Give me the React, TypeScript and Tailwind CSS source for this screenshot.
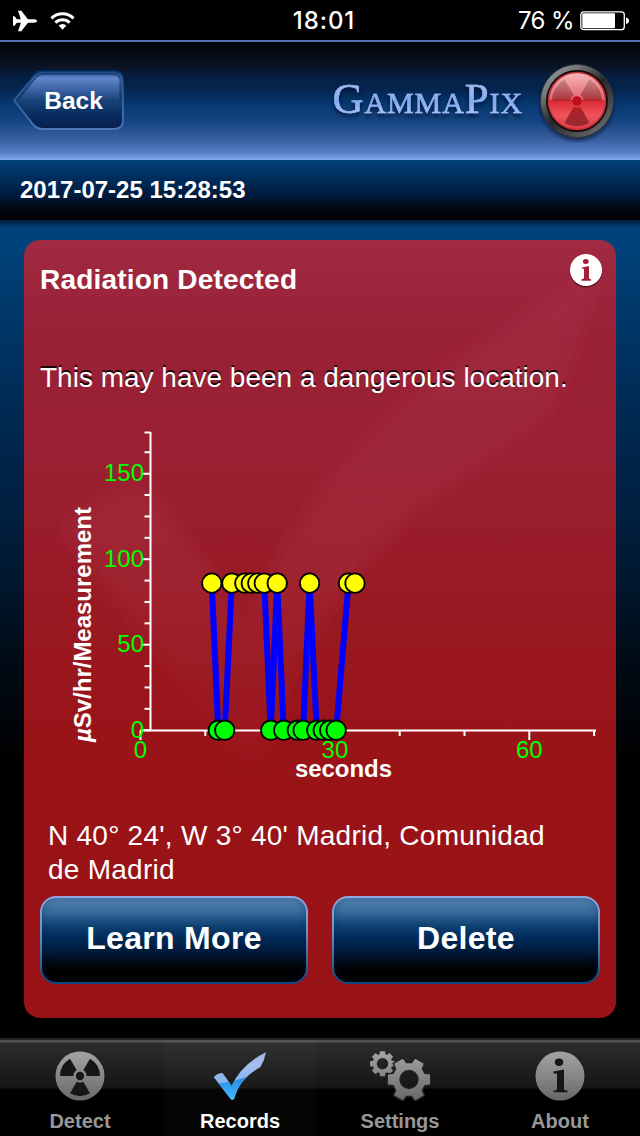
const HIGH = 86;

// [seconds, uSv/hr]
const readings: [number, number][] = [
  [11, HIGH],
  [12, 0],
  [13, 0],
  [14.1, HIGH],
  [16.1, HIGH],
  [17.1, HIGH],
  [18.1, HIGH],
  [19.1, HIGH],
  [20.1, 0],
  [21.1, HIGH],
  [22.1, 0],
  [24.2, 0],
  [25.1, 0],
  [26.1, HIGH],
  [27.2, 0],
  [28.2, 0],
  [29.2, 0],
  [30.2, 0],
  [32.1, HIGH],
  [33.1, HIGH],
];

const px = (t: number) => 80.5 + t * 6.48;
const py = (v: number) => 305.2 - v * 1.71;

const TICK =
  "M0.8 26.200Q4.500 22 9.500 22Q14 28 18.700 35Q27.800 13.700 53 1.200Q51.500 9.500 47.500 16Q26 28 21.300 47.500Q19.500 50 17.500 47.800Z";

// Blade wedge between two radii, angles in degrees clockwise from the right
function blade(cx: number, cy: number, r1: number, r2: number, from: number, to: number) {
  const p = (r: number, a: number) => {
    const rad = (a * Math.PI) / 180;
    return `${(cx + r * Math.cos(rad)).toFixed(2)} ${(cy + r * Math.sin(rad)).toFixed(2)}`;
  };
  return `M${p(r1, from)}L${p(r2, from)}A${r2} ${r2} 0 0 1 ${p(r2, to)}L${p(r1, to)}A${r1} ${r1} 0 0 0 ${p(r1, from)}Z`;
}

function gear(cx: number, cy: number, outer: number, body: number, hole: number, teeth: number, half: number) {
  const pts: string[] = [];
  for (let i = 0; i < teeth; i++) {
    const mid = (i * 2 * Math.PI) / teeth;
    const inner = Math.asin(half / body);
    const tip = Math.asin((half * 0.88) / outer);
    [
      [body, mid - inner],
      [outer, mid - tip],
      [outer, mid + tip],
      [body, mid + inner],
    ].forEach(([r, a]) => pts.push(`${(cx + r * Math.cos(a)).toFixed(2)} ${(cy + r * Math.sin(a)).toFixed(2)}`));
  }
  return `M${pts.join("L")}ZM${cx - hole} ${cy}a${hole} ${hole} 0 1 0 ${hole * 2} 0a${hole} ${hole} 0 1 0 ${-hole * 2} 0Z`;
}

const bladeAngles = [
  [180, 240],
  [300, 360],
  [60, 120],
];

function StatusBar() {
  return (
    <div className="grid h-10 shrink-0 grid-cols-3 items-center bg-black pl-[13px] pr-[11px] font-['Inter',sans-serif] text-white">
      <div className="flex items-center gap-[13px]">
        <svg width="24" height="22" viewBox="0 0 25 22" fill="#fff">
          <path d="M25 11c0-1.200-1.400-1.800-3.200-1.800h-6.200L8.600.3H5.200l3 8.900H4L1.700 6.100H0V15.900h1.700L4 12.800h4.200L5.200 21.700h3.400l7-8.900h6.200C23.600 12.800 25 12.200 25 11Z" />
        </svg>
        <svg width="25" height="20" viewBox="0 0 26 20" fill="none" stroke="#fff">
          <path d="M1.500 7.200a16.500 16.500 0 0 1 23 0" strokeWidth="3.200" />
          <path d="M5.600 11.700a10.500 10.500 0 0 1 14.800 0" strokeWidth="3.200" />
          <path d="M13 19l-4-4.200a5.700 5.700 0 0 1 8 0Z" fill="#fff" stroke="none" />
        </svg>
      </div>
      <div className="pl-[6px] text-center text-[24px] font-medium leading-[41px] tracking-[0.9px]">18:01</div>
      <div className="flex items-center justify-end gap-[6px]">
        <span className="whitespace-nowrap text-[24px] leading-[41px] tracking-[-0.6px]">76 %</span>
        <svg width="49" height="20" viewBox="0 0 49 20">
          <rect x="0.800" y="0.800" width="43.500" height="17.900" rx="3" fill="none" stroke="#fff" strokeWidth="1.300" />
          <rect x="2.300" y="2.300" width="32.700" height="14.900" rx="1" fill="#fff" />
          <path d="M46 6.500c2 .4 3 1.700 3 3.300s-1 2.900-3 3.300Z" fill="#fff" />
        </svg>
      </div>
    </div>
  );
}

function Emblem() {
  return (
    <svg width="80" height="84" viewBox="0 0 80 84" className="shrink-0">
      <defs>
        <linearGradient id="ring" x1="0.1" y1="0" x2="0.9" y2="1">
          <stop offset="0" stopColor="#a0a4a6" />
          <stop offset="0.22" stopColor="#75797c" />
          <stop offset="0.5" stopColor="#25282b" />
          <stop offset="0.75" stopColor="#4a4c4e" />
          <stop offset="1" stopColor="#77797a" />
        </linearGradient>
        <linearGradient id="redGlass" x1="0" y1="0" x2="0" y2="1">
          <stop offset="0" stopColor="#f7b9bb" />
          <stop offset="0.47" stopColor="#e0676c" />
          <stop offset="0.49" stopColor="#d92a35" />
          <stop offset="0.75" stopColor="#f0535c" />
          <stop offset="1" stopColor="#e23b47" />
        </linearGradient>
        <linearGradient id="redBlade" gradientUnits="userSpaceOnUse" x1="0" y1="18" x2="0" y2="68">
          <stop offset="0" stopColor="#c58a8d" />
          <stop offset="0.4" stopColor="#a43a42" />
          <stop offset="0.5" stopColor="#b5151f" />
          <stop offset="1" stopColor="#84252a" />
        </linearGradient>
        <filter id="soft" x="-30%" y="-30%" width="160%" height="160%">
          <feGaussianBlur stdDeviation="2" />
        </filter>
      </defs>
      <circle cx="40" cy="45" r="36.500" fill="#001028" opacity="0.7" filter="url(#soft)" />
      <circle cx="40" cy="42" r="36.500" fill="url(#ring)" stroke="#33383c" />
      <circle cx="40" cy="42" r="31" fill="#16080a" />
      <circle cx="40" cy="42" r="28.500" fill="url(#redGlass)" stroke="#c0323b" strokeWidth="1.500" />
      {bladeAngles.map(([from, to]) => (
        <path key={from} d={blade(40, 42, 6.5, 25, from, to)} fill="url(#redBlade)" opacity="0.85" />
      ))}
      <circle cx="40" cy="42" r="4.800" fill="#bb111c" />
    </svg>
  );
}

function Header() {
  return (
    <header className="flex h-[120px] shrink-0 items-center border-t-2 border-[#5074b3] bg-[linear-gradient(#020309,#0b1223_20%,#071f42_29%,#05244e_40%,#06386f_52%,#174684_68%,#385f9f_82%,#5379c5_93%,#7fabf0)] pl-3 pr-[23px]">
      <button className="relative h-[62px] w-[113px]">
        <svg width="113" height="62" viewBox="0 0 113 62" className="absolute inset-0">
          <defs>
            <linearGradient id="backFill" x1="0" y1="0" x2="0" y2="1">
              <stop offset="0" stopColor="#31569b" />
              <stop offset="0.12" stopColor="#6086cc" />
              <stop offset="0.3" stopColor="#3f65a8" />
              <stop offset="0.5" stopColor="#174478" />
              <stop offset="0.75" stopColor="#082d60" />
              <stop offset="1" stopColor="#061e4c" />
            </linearGradient>
            <linearGradient id="backEdge" x1="0" y1="0" x2="0" y2="1">
              <stop offset="0" stopColor="#043b72" />
              <stop offset="0.35" stopColor="#2a5a96" />
              <stop offset="1" stopColor="#4d78ba" />
            </linearGradient>
          </defs>
          <path
            d="M2 30.500L22 5.500Q25.500 1.500 30 1.500H102Q111 1.500 111 10.500V50Q111 59 102 59H30Q25.500 59 22 55.500Z"
            fill="url(#backFill)"
            stroke="url(#backEdge)"
            strokeWidth="1.800"
            strokeLinejoin="round"
          />
          <path
            d="M5 30L24 7Q27 4 31 4H101Q108.500 4 108.500 11V30"
            fill="none"
            stroke="#0a2857"
            strokeWidth="2"
            opacity="0.6"
          />
        </svg>
        <span className="relative block pl-[10px] text-[24.500px] font-bold leading-[58px] text-white">Back</span>
      </button>
      <div className="ml-auto flex items-center gap-[14px]">
        <div className="bg-[linear-gradient(#9fb9ee_25%,#84a9f0_50%,#a9c3f6_75%)] bg-clip-text font-['Liberation_Serif',serif] text-[30px] leading-[48px] tracking-[0.9px] text-transparent drop-shadow-[0_3px_2px_rgba(0,10,40,0.7)] [-webkit-text-stroke:0.5px_#8fb0f2]">
          <span className="text-[43px]">G</span>AMMA<span className="text-[43px]">P</span>IX
        </div>
        <Emblem />
      </div>
    </header>
  );
}

function Chart() {
  const points = readings.map(([t, v]) => `${px(t)},${py(v)}`).join(" ");
  const yTicks = Array.from({ length: 15 }, (_, i) => i * 12.5);
  const xTicks = Array.from({ length: 8 }, (_, i) => i * 10);

  return (
    <svg width="556" height="370" viewBox="0 0 556 370" className="block">
      <g stroke="#fff" strokeWidth="2">
        <path d="M90.500 7V305.500M80 305.500H536" />
        {yTicks.map((v) => (
          <path key={v} d={`M${v % 50 === 0 ? 82 : 84.500} ${v === 175 ? 7.500 : py(v)}H90.500`} />
        ))}
        {xTicks.map((t) => (
          <path key={t} d={`M${px(t)} 305.500V${t % 30 === 0 ? 315 : 311}`} />
        ))}
      </g>
      <g fill="#0f0" fontSize="24">
        {[0, 50, 100, 150].map((v) => (
          <text key={v} x="84" y={py(v) + 7.5} textAnchor="end">
            {v}
          </text>
        ))}
        {[0, 30, 60].map((t) => (
          <text key={t} x={px(t)} y="332.500" textAnchor="middle">
            {t}
          </text>
        ))}
      </g>
      <g fill="#fff" fontSize="24" fontWeight="700">
        <text x="235" y="352" textLength="97">
          seconds
        </text>
        <text transform="translate(31 317) rotate(-90)" textLength="235">
          <tspan fontStyle="italic">µ</tspan>Sv/hr/Measurement
        </text>
      </g>
      <polyline points={points} fill="none" stroke="#00f" strokeWidth="6" strokeLinejoin="round" />
      {readings.map(([t, v]) => (
        <circle key={t} cx={px(t)} cy={py(v)} r="9.700" fill={v > 0 ? "#ff0" : "#0f0"} stroke="#000" strokeWidth="1.800" />
      ))}
    </svg>
  );
}

function GlossButton({ label }: { label: string }) {
  return (
    <button className="h-[88px] w-[268px] rounded-[16px] bg-[linear-gradient(#8fa9dc,#7390c4_40%,#0c4580)] p-[2px]">
      <span className="block h-[84px] rounded-[14px] bg-[linear-gradient(#5584b0,#37699a_17%,#0d3f70_34%,#002a59_48%,#001c3d_62%,#000914_77%,#000_88%)] text-[32px] font-bold leading-[81px] tracking-[0.3px] text-white shadow-[inset_0_0_6px_rgba(0,40,90,0.4)]">
        {label}
      </span>
    </button>
  );
}

function ResultCard() {
  return (
    <section className="relative mx-6 mt-5 h-[778px] overflow-hidden rounded-[16px] bg-[linear-gradient(#a02a42,#9a2136_12%,#9a1f31_30%,#99171f_52%,#991317_68%,#981216)] text-white">
      {/* Watermark tick behind the result */}
      <svg width="592" height="778" viewBox="0 0 592 778" className="absolute inset-0">
        <defs>
          <linearGradient id="mark" x1="0" y1="0" x2="0" y2="1">
            <stop offset="0" stopColor="#c04a68" stopOpacity="0.14" />
            <stop offset="0.65" stopColor="#c04a68" stopOpacity="0.15" />
            <stop offset="1" stopColor="#c04a68" stopOpacity="0.03" />
          </linearGradient>
          <filter id="blurMark">
            <feGaussianBlur stdDeviation="0.8" />
          </filter>
        </defs>
        <g transform="translate(28 20) scale(10.3)">
          <path d={TICK} fill="url(#mark)" filter="url(#blurMark)" />
        </g>
      </svg>
      <div className="relative flex h-full flex-col">
        <div className="flex h-[120px] justify-between pl-4 pr-[13px] pt-[14px]">
          <h1 className="pt-[9px] text-[28px] font-bold leading-[34px] tracking-[0.2px]">Radiation Detected</h1>
          <svg width="34" height="36" viewBox="0 0 34 36">
            <circle cx="17" cy="17.500" r="16" fill="#5a1020" />
            <circle cx="17" cy="16" r="16" fill="#fff" />
            <g fill="#a02038">
              <ellipse cx="16.800" cy="7.500" rx="2.900" ry="2.500" />
              <path d="M13 13.500L20 12V24.600L22 25.300V26.700H12.500V25.300L15 24.600V14.800H13Z" />
            </g>
          </svg>
        </div>
        <p className="h-[65px] pl-4 text-[28px] leading-[36px] [text-shadow:0_-2px_0_#1a0508]">
          This may have been a dangerous location.
        </p>
        <div className="pl-9">
          <Chart />
        </div>
        <p className="mt-[24px] w-[540px] pl-6 text-[28px] leading-[34px] tracking-[0.25px]">
          N 40° 24', W 3° 40' Madrid, Comunidad de Madrid
        </p>
        <div className="mt-[9px] flex justify-between px-4">
          <GlossButton label="Learn More" />
          <GlossButton label="Delete" />
        </div>
      </div>
    </section>
  );
}

function DetectIcon() {
  return (
    <svg width="50" height="50" viewBox="0 0 50 50">
      <circle cx="25" cy="25" r="24.500" fill="url(#grey)" />
      <g fill="#161616">
        {bladeAngles.map(([from, to]) => (
          <path key={from} d={blade(25, 25, 6.5, 20, from, to)} />
        ))}
        <circle cx="25" cy="25" r="4.200" />
      </g>
    </svg>
  );
}

function RecordsIcon() {
  return (
    <svg width="54" height="50" viewBox="0 0 54 50">
      <defs>
        <linearGradient id="tick" gradientUnits="userSpaceOnUse" x1="0" y1="1" x2="0" y2="34">
          <stop offset="0" stopColor="#a3b9e8" />
          <stop offset="0.45" stopColor="#a3bdf0" />
          <stop offset="1" stopColor="#80b2ec" />
        </linearGradient>
        <linearGradient id="tickLow" gradientUnits="userSpaceOnUse" x1="0" y1="26" x2="0" y2="50">
          <stop offset="0" stopColor="#2389e8" />
          <stop offset="1" stopColor="#45beff" />
        </linearGradient>
        <clipPath id="tickShape">
          <path d={TICK} />
        </clipPath>
      </defs>
      <g clipPath="url(#tickShape)">
        <rect width="54" height="50" fill="url(#tick)" />
        <path d="M0 33Q20 32 44 22V50H0Z" fill="url(#tickLow)" />
      </g>
    </svg>
  );
}

function SettingsIcon() {
  return (
    <svg width="62" height="50" viewBox="0 0 62 50" fill="url(#grey)" fillRule="evenodd">
      <path d={gear(13.5, 12.7, 12.7, 9.8, 5.7, 8, 2.9)} />
      <path d={gear(40, 28.5, 21.6, 16.5, 9.7, 6, 5.6)} fill="none" stroke="#202020" strokeWidth="3" />
      <path d={gear(40, 28.5, 21.6, 16.5, 9.7, 6, 5.6)} />
    </svg>
  );
}

function AboutIcon() {
  return (
    <svg width="50" height="50" viewBox="0 0 50 50">
      <circle cx="25" cy="25" r="24.500" fill="url(#grey)" />
      <g fill="#161616">
        <ellipse cx="24" cy="11.300" rx="4.200" ry="3.700" />
        <path d="M18.500 20.500L29 18.500V38Q29 39.500 32.500 39.500V41.200H18.500V39.500Q22 39.500 22 38V22.500H18.500Z" />
      </g>
    </svg>
  );
}

const tabs = [
  { label: "Detect", icon: DetectIcon },
  { label: "Records", icon: RecordsIcon, active: true },
  { label: "Settings", icon: SettingsIcon },
  { label: "About", icon: AboutIcon },
];

function TabBar() {
  return (
    <nav className="relative grid h-[98px] shrink-0 grid-cols-4 border-t-2 border-[#222] bg-[linear-gradient(#525252_0,#525252_2px,#2c2c2c_3px,#151515_48px,#000_49px)]">
      <svg width="0" height="0" className="absolute">
        <defs>
          <linearGradient id="grey" gradientUnits="userSpaceOnUse" x1="0" y1="0" x2="0" y2="50">
            <stop offset="0" stopColor="#a4a4a4" />
            <stop offset="1" stopColor="#686868" />
          </linearGradient>
        </defs>
      </svg>
      {tabs.map(({ label, icon: Icon, active }) => (
        <button
          key={label}
          className={`mx-1 flex flex-col items-center rounded-md pt-[11px] ${active ? "bg-white/[0.02] text-white" : "text-[#989898]"}`}
        >
          <Icon />
          <span className="mt-[8px] text-[20px] font-bold leading-[24px]">{label}</span>
        </button>
      ))}
    </nav>
  );
}

export default function App() {
  return (
    <div className="flex h-[1136px] w-[640px] flex-col overflow-hidden bg-black font-['Liberation_Sans',Arial,sans-serif]">
      <StatusBar />
      <Header />
      <div className="h-[60px] shrink-0 bg-[linear-gradient(#00437c,#002d5d_30%,#001a3a_60%,#000814_80%,#000)] pl-5 text-[24px] font-bold leading-[60px] text-white">
        2017-07-25 15:28:53
      </div>
      <main className="h-[818px] shrink-0 bg-[linear-gradient(#001c3c,#00437a_8px,#00427a_24px,#003768_100px,#002850_205px,#001a35_340px,#000b16_440px,#000_540px)]">
        <div className="flow-root">
          <ResultCard />
        </div>
      </main>
      <TabBar />
    </div>
  );
}
